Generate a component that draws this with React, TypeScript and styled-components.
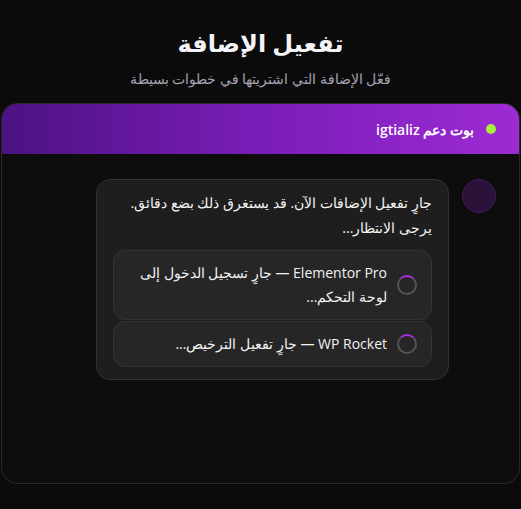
import React from "react";
import styled, { createGlobalStyle } from "styled-components";

const Global = createGlobalStyle`
  html, body { margin: 0; padding: 0; background: #0b0b0b; }
  body { font-family: "Open Sans", "Noto Sans", sans-serif; color: #f2f2f2; }
  * { box-sizing: border-box; }
`;

const Page = styled.div`
  direction: rtl;
  padding: 25px 1px 24px;
  display: flex;
  flex-direction: column;
  align-items: stretch;
`;

const Title = styled.h1`
  margin: 0;
  text-align: center;
  font-family: "Noto Sans", "DejaVu Sans", sans-serif;
  font-size: 24px;
  font-weight: 700;
  line-height: 36px;
  color: #f4f4f8;
`;

const Subtitle = styled.p`
  margin: 7px 0 0;
  text-align: center;
  font-size: 14px;
  line-height: 22px;
  color: #a3a3b3;
`;

const Card = styled.section`
  margin-top: 13px;
  height: 381px;
  border: 1px solid #2a2a2a;
  border-radius: 16px;
  background: #0d0d0d;
  overflow: hidden;
  display: flex;
  flex-direction: column;
`;

const Header = styled.header`
  height: 50px;
  flex: none;
  display: flex;
  align-items: center;
  gap: 12px;
  padding: 0 23px;
  background: linear-gradient(90deg, #4c1282 0%, #7a1db8 50%, #9d2bd3 100%);
`;

const Dot = styled.span`
  width: 10px;
  height: 10px;
  border-radius: 50%;
  background: #a6ef3a;
`;

const HeaderText = styled.span`
  font-size: 14px;
  font-weight: 600;
  color: #ffffff;
`;

const Body = styled.div`
  flex: 1;
  padding: 25px 23px;
`;

const Row = styled.div`
  display: flex;
  align-items: flex-start;
  gap: 13px;
`;

const Avatar = styled.div`
  flex: none;
  width: 34px;
  height: 34px;
  border-radius: 50%;
  background: #2a1238;
  border: 1px solid #441a66;
`;

const Bubble = styled.div`
  width: 353px;
  background: #1e1e1e;
  border: 1px solid #333333;
  border-radius: 14px;
  padding: 10px 16px 12px;
`;

const Message = styled.p`
  margin: 0 0 10px;
  font-size: 14px;
  line-height: 25px;
  color: #f4f4f4;
`;

const Items = styled.div`
  display: flex;
  flex-direction: column;
  gap: 1px;
`;

const Item = styled.div`
  display: flex;
  align-items: center;
  gap: 10px;
  padding: 10px 14px;
  background: #262626;
  border: 1px solid #343434;
  border-radius: 12px;
`;

const Spinner = styled.span`
  flex: none;
  width: 20px;
  height: 20px;
  border-radius: 50%;
  border: 2px solid #555555;
  border-top-color: #a22fe0;
`;

const ItemText = styled.span`
  font-size: 14px;
  line-height: 24px;
  color: #f2f2f2;
`;

export default function App() {
  return (
    <>
      <Global />
      <Page>
        <Title>تفعيل الإضافة</Title>
        <Subtitle>فعّل الإضافة التي اشتريتها في خطوات بسيطة</Subtitle>
        <Card>
          <Header>
            <Dot />
            <HeaderText>بوت دعم igtializ</HeaderText>
          </Header>
          <Body>
            <Row>
              <Avatar />
              <Bubble>
                <Message>جارٍ تفعيل الإضافات الآن. قد يستغرق ذلك بضع دقائق. يرجى الانتظار...</Message>
                <Items>
                  <Item>
                    <Spinner />
                    <ItemText>Elementor Pro — جارٍ تسجيل الدخول إلى لوحة التحكم...</ItemText>
                  </Item>
                  <Item>
                    <Spinner />
                    <ItemText>WP Rocket — جارٍ تفعيل الترخيص...</ItemText>
                  </Item>
                </Items>
              </Bubble>
            </Row>
          </Body>
        </Card>
      </Page>
    </>
  );
}
